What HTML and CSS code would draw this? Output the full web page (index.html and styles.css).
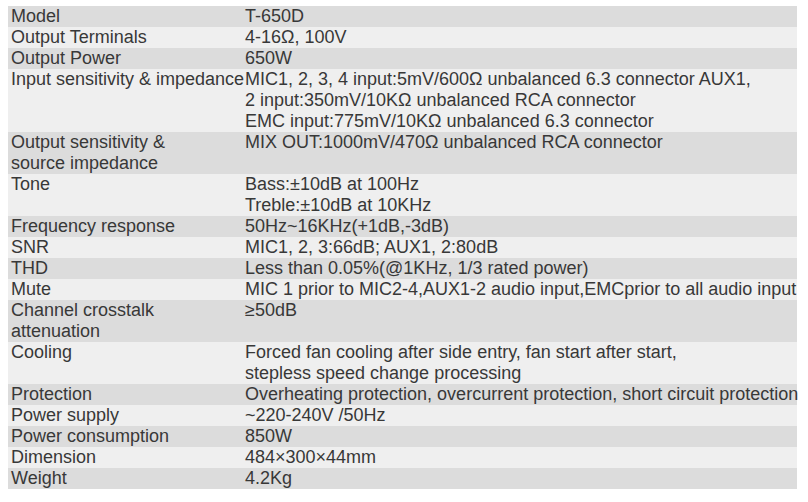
FILE: index.html
```html
<!DOCTYPE html>
<html>
<head>
<meta charset="utf-8">
<link rel="stylesheet" href="styles.css">
</head>
<body>
<table class="spec">
<tr><td class="k">Model</td><td class="v">T-650D</td></tr>
<tr><td class="k">Output Terminals</td><td class="v">4-16Ω, 100V</td></tr>
<tr><td class="k">Output Power</td><td class="v">650W</td></tr>
<tr><td class="k">Input sensitivity &amp; impedance</td><td class="v">MIC1, 2, 3, 4 input:5mV/600Ω unbalanced 6.3 connector AUX1,<br>2 input:350mV/10KΩ unbalanced RCA connector<br>EMC input:775mV/10KΩ unbalanced 6.3 connector</td></tr>
<tr><td class="k">Output sensitivity &amp;<br>source impedance</td><td class="v">MIX OUT:1000mV/470Ω unbalanced RCA connector</td></tr>
<tr><td class="k">Tone</td><td class="v">Bass:±10dB at 100Hz<br>Treble:±10dB at 10KHz</td></tr>
<tr><td class="k">Frequency response</td><td class="v">50Hz~16KHz(+1dB,-3dB)</td></tr>
<tr><td class="k">SNR</td><td class="v">MIC1, 2, 3:66dB; AUX1, 2:80dB</td></tr>
<tr><td class="k">THD</td><td class="v">Less than 0.05%(@1KHz, 1/3 rated power)</td></tr>
<tr><td class="k">Mute</td><td class="v">MIC 1 prior to MIC2-4,AUX1-2 audio input,EMCprior to all audio input</td></tr>
<tr><td class="k">Channel crosstalk<br>attenuation</td><td class="v">≥50dB</td></tr>
<tr><td class="k">Cooling</td><td class="v">Forced fan cooling after side entry, fan start after start,<br>stepless speed change processing</td></tr>
<tr><td class="k">Protection</td><td class="v">Overheating protection, overcurrent protection, short circuit protection</td></tr>
<tr><td class="k">Power supply</td><td class="v">~220-240V /50Hz</td></tr>
<tr><td class="k">Power consumption</td><td class="v">850W</td></tr>
<tr><td class="k">Dimension</td><td class="v">484×300×44mm</td></tr>
<tr><td class="k">Weight</td><td class="v">4.2Kg</td></tr>
</table>
</body>
</html>
```
FILE: styles.css
```css
html, body {
  margin: 0;
  padding: 0;
  background: #ffffff;
}
body {
  padding: 6px 0 0 8px;
  font-family: "Liberation Sans", Arial, sans-serif;
  font-size: 18px;
  line-height: 21px;
  color: #383838;
}
.spec {
  border-collapse: collapse;
  width: 789px;
  table-layout: fixed;
}
.spec td {
  padding: 0;
  vertical-align: top;
  white-space: nowrap;
  overflow: visible;
}
.spec tr:nth-child(odd) td {
  background: #dcdcdc;
}
.spec tr:nth-child(even) td {
  background: #efefef;
}
.spec .k {
  width: 233px;
  padding-left: 3px;
}
.spec .v {
  padding-left: 1px;
}
```
